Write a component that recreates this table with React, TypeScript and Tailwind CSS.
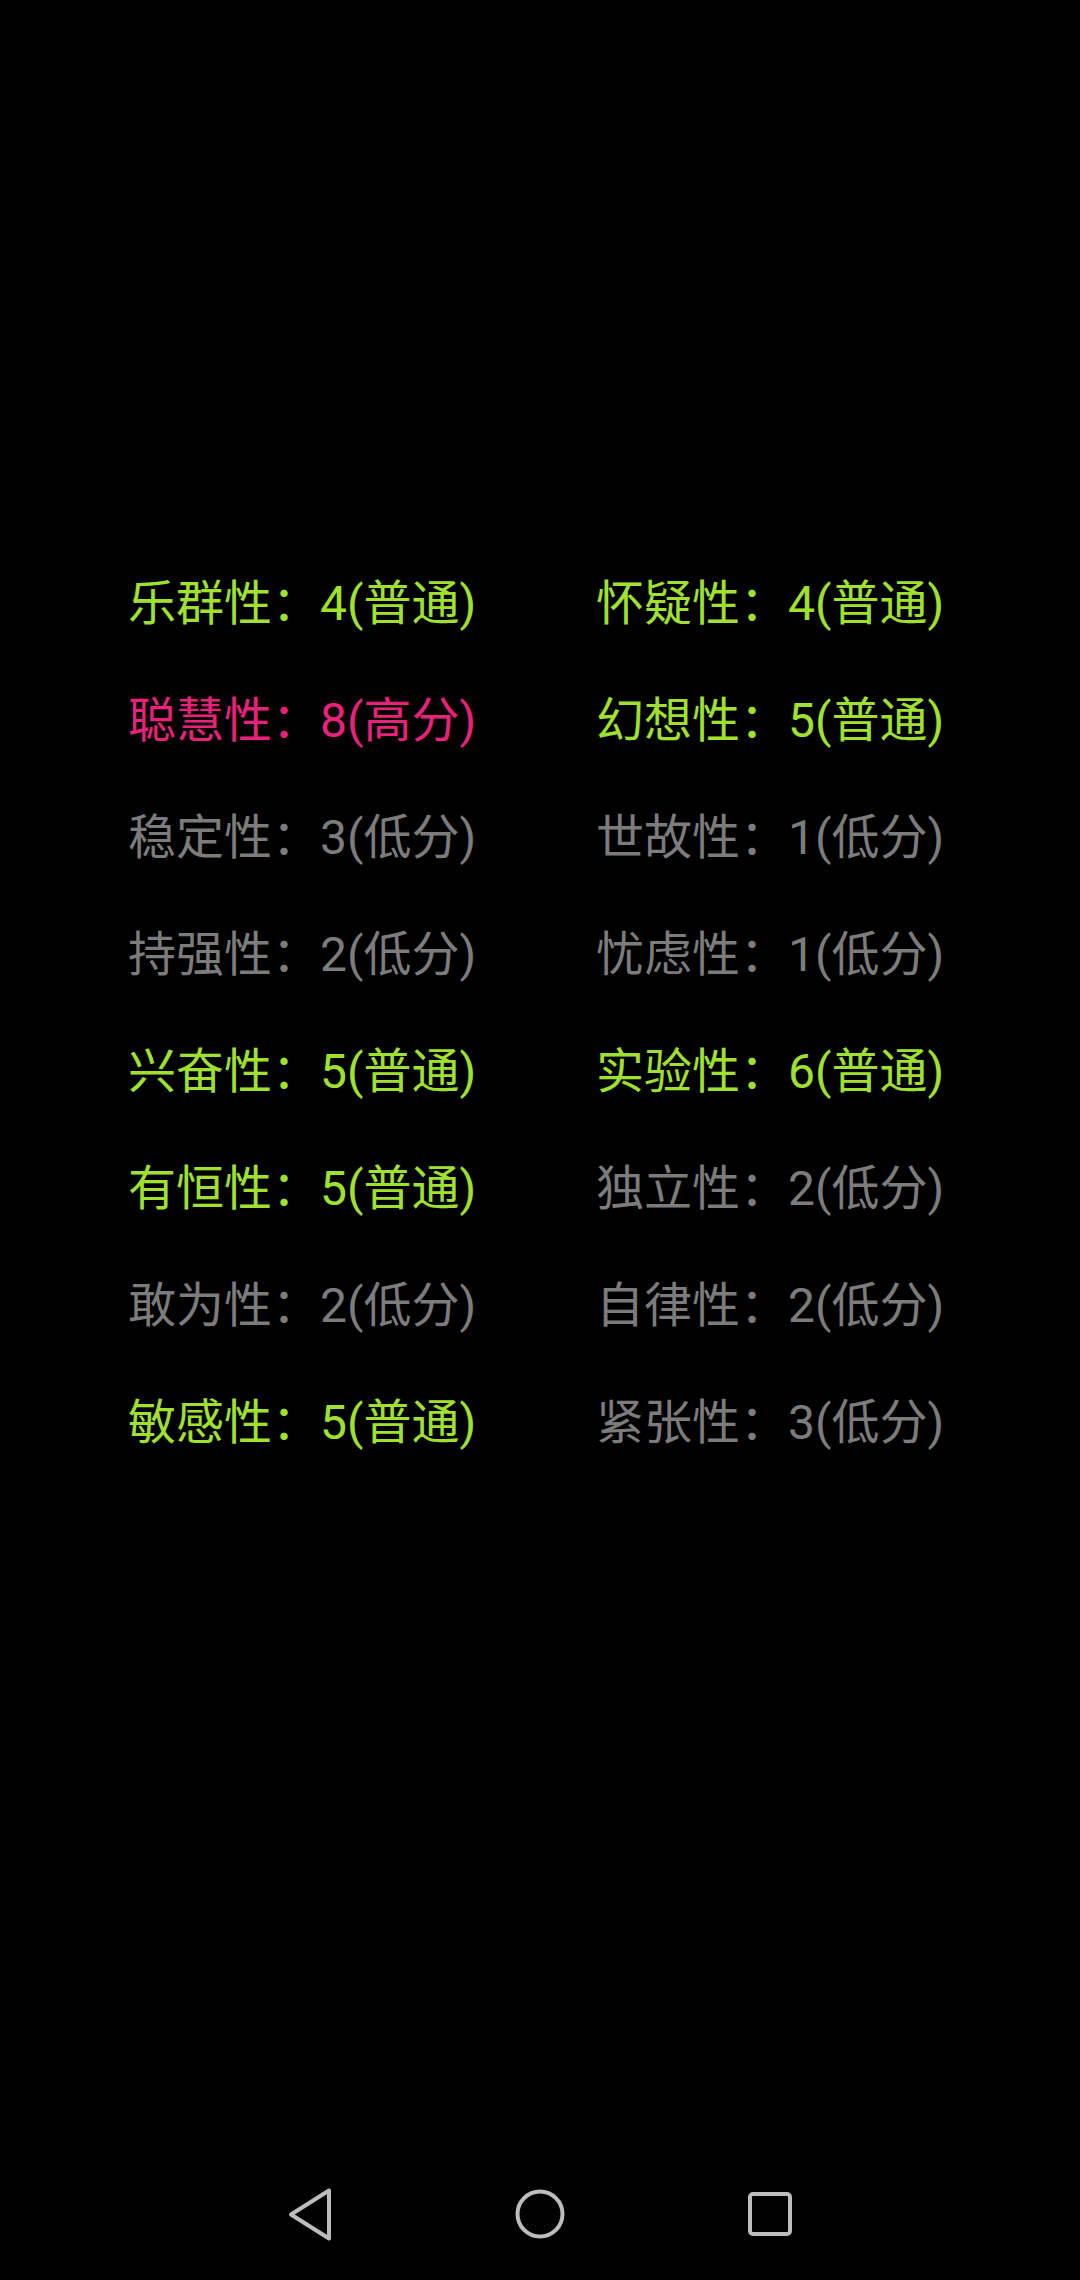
const GREEN = 'text-[#a0e02e]'
const PINK = 'text-[#e8227a]'
const GRAY = 'text-[#7c7c7c]'

type Trait = { name: string; score: number; level: string; color: string }

const traits: Trait[] = [
  { name: '乐群性', score: 4, level: '普通', color: GREEN },
  { name: '怀疑性', score: 4, level: '普通', color: GREEN },
  { name: '聪慧性', score: 8, level: '高分', color: PINK },
  { name: '幻想性', score: 5, level: '普通', color: GREEN },
  { name: '稳定性', score: 3, level: '低分', color: GRAY },
  { name: '世故性', score: 1, level: '低分', color: GRAY },
  { name: '持强性', score: 2, level: '低分', color: GRAY },
  { name: '忧虑性', score: 1, level: '低分', color: GRAY },
  { name: '兴奋性', score: 5, level: '普通', color: GREEN },
  { name: '实验性', score: 6, level: '普通', color: GREEN },
  { name: '有恒性', score: 5, level: '普通', color: GREEN },
  { name: '独立性', score: 2, level: '低分', color: GRAY },
  { name: '敢为性', score: 2, level: '低分', color: GRAY },
  { name: '自律性', score: 2, level: '低分', color: GRAY },
  { name: '敏感性', score: 5, level: '普通', color: GREEN },
  { name: '紧张性', score: 3, level: '低分', color: GRAY },
]

// nav keys: back / home / recents
function NavBar() {
  return (
    <div className="flex h-[130px] items-center justify-center pb-[2px]">
      <div className="flex w-[230px] justify-center">
        <svg width="47" height="55" viewBox="0 0 47 55" fill="none">
          <path d="M42 3.5 L4 27.5 L42 51.5 Z" stroke="#bdbdbd" strokeWidth="4" strokeLinejoin="round" />
        </svg>
      </div>
      <div className="flex w-[230px] justify-center">
        <svg width="54" height="54" viewBox="0 0 54 54" fill="none">
          <circle cx="27" cy="27" r="22.5" stroke="#bdbdbd" strokeWidth="4" />
        </svg>
      </div>
      <div className="flex w-[230px] justify-center">
        <svg width="48" height="48" viewBox="0 0 48 48" fill="none">
          <rect x="4" y="4" width="40" height="40" rx="3" stroke="#bdbdbd" strokeWidth="4" />
        </svg>
      </div>
    </div>
  )
}

export default function App() {
  return (
    <div className="flex h-[2280px] w-[1080px] flex-col bg-black font-['Roboto','Noto_Sans_CJK_SC',sans-serif]">
      <div className="flex-1 pt-[545px] pl-[128px]">
        <div className="grid grid-cols-[468px_auto]">
          {traits.map((t) => (
            <div key={t.name} className={`h-[117px] text-[48px] leading-[117px] whitespace-nowrap ${t.color}`}>
              {t.name}：{t.score}({t.level})
            </div>
          ))}
        </div>
      </div>
      <NavBar />
    </div>
  )
}
